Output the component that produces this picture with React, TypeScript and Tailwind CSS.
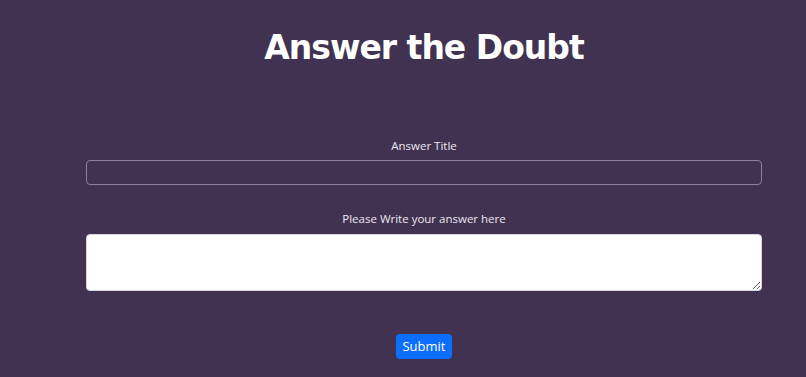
export default function App() {
  return (
    <div className="min-h-screen bg-[#413252] font-['Open_Sans',sans-serif] text-white">
      <div className="ml-[86px] flex w-[676px] flex-col items-center">
        <h1 className="mt-[28px] font-['DejaVu_Sans',sans-serif] text-[33px] font-extrabold leading-[40px] tracking-[-1px]">
          Answer the Doubt
        </h1>

        <label className="mt-[69px] text-[11.5px] leading-[18px] text-[#ece8f0]">Answer Title</label>
        <input
          type="text"
          className="mt-[5px] h-[25px] w-full rounded-[4px] border border-[#8b819a] bg-transparent px-2 text-[13px] outline-none"
        />

        <label className="mt-[25px] text-[11.5px] leading-[18px] text-[#ece8f0]">Please Write your answer here</label>
        <textarea className="mt-[6px] h-[57px] w-full rounded-[4px] border border-[#d8d4de] bg-white px-2 text-[13px] text-black outline-none" />

        <button className="mt-[43px] h-[25px] w-[56px] rounded-[4px] bg-[#0d6efd] text-[13px] text-white">
          Submit
        </button>
      </div>
    </div>
  )
}
